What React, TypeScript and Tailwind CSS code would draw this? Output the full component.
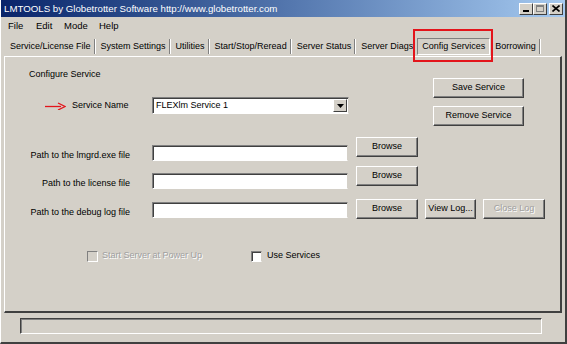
import type { FC, ReactNode } from "react"

const tabs = [
  "Service/License File",
  "System Settings",
  "Utilities",
  "Start/Stop/Reread",
  "Server Status",
  "Server Diags",
  "Config Services",
  "Borrowing",
]
const selected = "Config Services"

// classic raised 3d button
const Btn: FC<{ w: string; children: ReactNode; disabled?: boolean }> = ({ w, children, disabled }) => (
  <div
    className={`${w} h-[20px] shrink-0 flex items-center justify-center whitespace-nowrap border border-t-white border-l-white border-r-[#404040] border-b-[#404040] shadow-[inset_-1px_-1px_#808080] ${
      disabled ? "text-[#a0a0a0] [text-shadow:1px_1px_#ffffff]" : "text-black"
    }`}
  >
    {children}
  </div>
)

const Field: FC<{ className?: string; children?: ReactNode }> = ({ className = "", children }) => (
  <div
    className={`h-[16px] shrink-0 bg-white border border-t-[#808080] border-l-[#808080] border-b-white border-r-[#d4d0c8] shadow-[inset_1px_1px_#404040] ${className}`}
  >
    {children}
  </div>
)

const PathRow: FC<{ label: string; labelTop: string; fieldTop: string; mt: string; extra?: boolean }> = ({
  label,
  labelTop,
  fieldTop,
  mt,
  extra,
}) => (
  <div className={`flex items-start ${mt}`}>
    <div className={`w-[125px] text-right leading-[12px] whitespace-nowrap ${labelTop}`}>{label}</div>
    <Field className={`ml-[22px] w-[196px] ${fieldTop}`} />
    <div className="ml-[8px]">
      <Btn w="w-[62px]">Browse</Btn>
    </div>
    {extra && (
      <>
        <div className="ml-[7px]">
          <Btn w="w-[51px]">View Log...</Btn>
        </div>
        <div className="ml-[7px]">
          <Btn w="w-[62px]" disabled>
            Close Log
          </Btn>
        </div>
      </>
    )}
  </div>
)

export default function App() {
  return (
    <div className="w-[567px] h-[344px] bg-[#d4d0c8] font-['Liberation_Sans',Arial,sans-serif] text-[9px] text-black flex flex-col border-l border-l-white border-r-2 border-r-[#404040] border-b-2 border-b-[#404040] overflow-hidden">
      {/* title bar */}
      <div className="h-[17px] shrink-0 flex items-center bg-gradient-to-r from-[#0a246a] to-[#a6caf0] pl-[3px] pr-[2px]">
        <span className="text-white text-[9.7px] leading-none whitespace-nowrap">LMTOOLS by Globetrotter Software http://www.globetrotter.com</span>
        <div className="ml-auto flex items-center">
          <div className="w-[14px] h-[12px] bg-[#d4d0c8] border border-t-white border-l-white border-r-[#404040] border-b-[#404040] flex items-end justify-center pb-[2px]">
            <div className="w-[6px] h-[2px] bg-black" />
          </div>
          <div className="w-[14px] h-[12px] bg-[#d4d0c8] border border-t-white border-l-white border-r-[#404040] border-b-[#404040] flex items-center justify-center">
            <div className="w-[8px] h-[7px] border border-[#808080] border-t-2" />
          </div>
          <div className="ml-[2px] w-[14px] h-[12px] bg-[#d4d0c8] border border-t-white border-l-white border-r-[#404040] border-b-[#404040] flex items-center justify-center">
            <svg width="8" height="7" viewBox="0 0 8 7">
              <path d="M0.5 0.5 L7.5 6.5 M7.5 0.5 L0.5 6.5" stroke="#000" strokeWidth="1.6" />
            </svg>
          </div>
        </div>
      </div>

      {/* menu */}
      <div className="h-[18px] shrink-0 flex items-center text-[9.5px] pl-[7px]">
        <span className="w-[28px]">File</span>
        <span className="w-[28px]">Edit</span>
        <span className="w-[35px]">Mode</span>
        <span>Help</span>
      </div>

      {/* tabs */}
      <div className="h-[21px] shrink-0 flex items-center pl-[4px] pt-[2px] whitespace-nowrap">
        {tabs.map((t, i) => {
          const isSel = t === selected
          const nextSel = tabs[i + 1] === selected
          if (isSel)
            return (
              <div key={t} className="relative ml-[1px] h-[17px] px-[4px] flex items-center shrink-0 border border-t-[#808080] border-l-[#808080] border-b-white border-r-white">
                {t}
                <div className="absolute -left-[5px] -top-[10px] -right-[4px] h-[33px] border-2 border-[#e3141b]" />
              </div>
            )
          return (
            <div key={t} className="flex items-center h-[17px] shrink-0">
              <span className="pl-[5px] pr-[3px]">{t}</span>
              {!nextSel && <div className="w-[2px] h-[15px] border-l border-l-[#808080] border-r border-r-white" />}
            </div>
          )
        })}
      </div>

      {/* tab panel */}
      <div className="ml-[3px] mr-[3px] h-[257px] shrink-0 flex flex-col border-t border-l border-t-white border-l-white border-r-2 border-b-2 border-r-[#404040] border-b-[#404040]">
        {/* service block */}
        <div className="flex h-[70px] shrink-0">
          <div className="w-[344px] flex flex-col">
            <div className="mt-[11px] ml-[24px] leading-[12px]">Configure Service</div>
            <div className="mt-[17px] flex items-center h-[17px]">
              <svg className="ml-[40px]" width="21" height="8" viewBox="0 0 21 8">
                <path d="M0 4.5 H16" stroke="#e3141b" strokeWidth="1.3" />
                <path d="M13 1 L20 4.5 L13 8" fill="none" stroke="#e3141b" strokeWidth="1.3" />
              </svg>
              <span className="ml-[6px] w-[80px]">Service Name</span>
              <Field className="w-[197px] h-[17px] flex items-center pl-[3px] relative">
                <span>FLEXlm Service 1</span>
                <div className="ml-auto mr-[1px] w-[14px] h-[13px] bg-[#d4d0c8] border border-t-white border-l-white border-r-[#404040] border-b-[#404040] flex items-center justify-center">
                  <svg width="7" height="4" viewBox="0 0 7 4">
                    <path d="M0 0 H7 L3.5 4 Z" fill="#000" />
                  </svg>
                </div>
              </Field>
            </div>
          </div>
          <div className="ml-[84px] flex flex-col">
            <div className="mt-[21px]">
              <Btn w="w-[91px]">Save Service</Btn>
            </div>
            <div className="mt-[8px]">
              <Btn w="w-[91px]">Remove Service</Btn>
            </div>
          </div>
        </div>

        {/* paths */}
        <PathRow mt="mt-[10px]" label="Path to the lmgrd.exe file" labelTop="mt-[12px]" fieldTop="mt-[8px]" />
        <PathRow mt="mt-[5px]" label="Path to the license file" labelTop="mt-[11px]" fieldTop="mt-[7px]" />
        <PathRow mt="mt-[10px]" label="Path to the debug log file" labelTop="mt-[7px]" fieldTop="mt-[3px]" extra />

        {/* checkboxes */}
        <div className="mt-[31px] flex items-center h-[12px]">
          <div className="ml-[82px] w-[11px] h-[11px] bg-[#d4d0c8] border border-t-[#808080] border-l-[#808080] border-b-white border-r-white" />
          <span className="ml-[4px] text-[#a0a0a0] [text-shadow:1px_1px_#ffffff]">Start Server at Power Up</span>
          <div className="ml-[49px] w-[11px] h-[11px] bg-white border border-t-[#808080] border-l-[#808080] border-b-white border-r-[#d4d0c8] shadow-[inset_1px_1px_#404040]" />
          <span className="ml-[5px]">Use Services</span>
        </div>
      </div>

      {/* status bar */}
      <div className="mt-[5px] ml-[19px] w-[522px] h-[16px] shrink-0 border border-t-[#404040] border-l-[#404040] border-b-white border-r-white shadow-[inset_1px_1px_#808080]" />
    </div>
  )
}
